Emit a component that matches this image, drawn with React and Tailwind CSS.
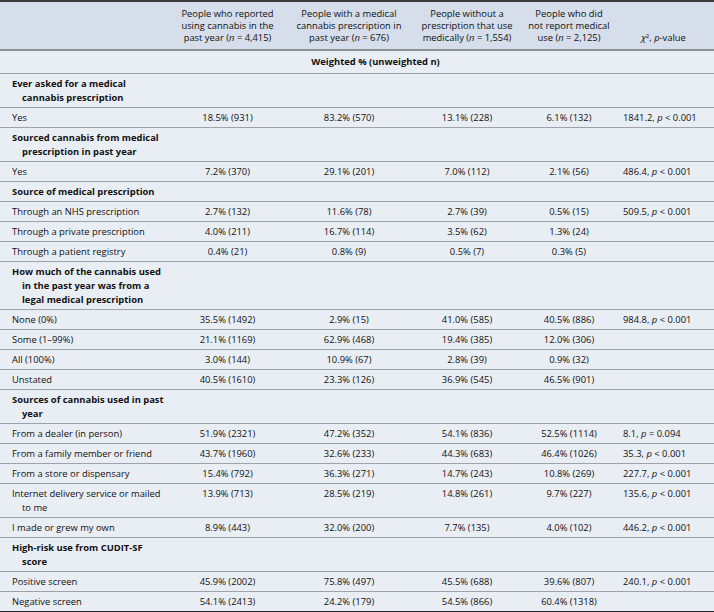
import React from "react";

const cols = [
  ["People who reported", "using cannabis in the", ["past year (", "n", " = 4,415)"]],
  ["People with a medical", "cannabis prescription in", ["past year (", "n", " = 676)"]],
  ["People without a", "prescription that use", ["medically (", "n", " = 1,554)"]],
  ["People who did", "not report medical", ["use (", "n", " = 2,125)"]],
];

const rows = [
  { section: ["Ever asked for a medical", "cannabis prescription"] },
  { label: "Yes", vals: ["18.5% (931)", "83.2% (570)", "13.1% (228)", "6.1% (132)"], stat: ["1841.2", "<", "0.001"] },
  { section: ["Sourced cannabis from medical", "prescription in past year"] },
  { label: "Yes", vals: ["7.2% (370)", "29.1% (201)", "7.0% (112)", "2.1% (56)"], stat: ["486.4", "<", "0.001"] },
  { section: ["Source of medical prescription"] },
  { label: "Through an NHS prescription", vals: ["2.7% (132)", "11.6% (78)", "2.7% (39)", "0.5% (15)"], stat: ["509.5", "<", "0.001"] },
  { label: "Through a private prescription", vals: ["4.0% (211)", "16.7% (114)", "3.5% (62)", "1.3% (24)"] },
  { label: "Through a patient registry", vals: ["0.4% (21)", "0.8% (9)", "0.5% (7)", "0.3% (5)"] },
  { section: ["How much of the cannabis used", "in the past year was from a", "legal medical prescription"] },
  { label: "None (0%)", vals: ["35.5% (1492)", "2.9% (15)", "41.0% (585)", "40.5% (886)"], stat: ["984.8", "<", "0.001"] },
  { label: "Some (1–99%)", vals: ["21.1% (1169)", "62.9% (468)", "19.4% (385)", "12.0% (306)"] },
  { label: "All (100%)", vals: ["3.0% (144)", "10.9% (67)", "2.8% (39)", "0.9% (32)"] },
  { label: "Unstated", vals: ["40.5% (1610)", "23.3% (126)", "36.9% (545)", "46.5% (901)"] },
  { section: ["Sources of cannabis used in past", "year"] },
  { label: "From a dealer (in person)", vals: ["51.9% (2321)", "47.2% (352)", "54.1% (836)", "52.5% (1114)"], stat: ["8.1", "=", "0.094"] },
  { label: "From a family member or friend", vals: ["43.7% (1960)", "32.6% (233)", "44.3% (683)", "46.4% (1026)"], stat: ["35.3", "<", "0.001"] },
  { label: "From a store or dispensary", vals: ["15.4% (792)", "36.3% (271)", "14.7% (243)", "10.8% (269)"], stat: ["227.7", "<", "0.001"] },
  { label: ["Internet delivery service or mailed", "to me"], vals: ["13.9% (713)", "28.5% (219)", "14.8% (261)", "9.7% (227)"], stat: ["135.6", "<", "0.001"] },
  { label: "I made or grew my own", vals: ["8.9% (443)", "32.0% (200)", "7.7% (135)", "4.0% (102)"], stat: ["446.2", "<", "0.001"] },
  { section: ["High-risk use from CUDIT-SF", "score"] },
  { label: "Positive screen", vals: ["45.9% (2002)", "75.8% (497)", "45.5% (688)", "39.6% (807)"], stat: ["240.1", "<", "0.001"] },
  { label: "Negative screen", vals: ["54.1% (2413)", "24.2% (179)", "54.5% (866)", "60.4% (1318)"] },
];

const Lines = ({ lines }) =>
  lines.map((l, i) => (
    <React.Fragment key={i}>
      {i > 0 && <br />}
      {l}
    </React.Fragment>
  ));

export default function App() {
  return (
    <div className="w-[714px] h-[612px] bg-[#e9eef5] text-[#111] font-['Open_Sans',sans-serif] text-[9.4px] leading-[14px]">
      <table className="w-full table-fixed border-collapse">
        <colgroup>
          <col className="w-[170px]" />
          <col className="w-[115px]" />
          <col className="w-[128px]" />
          <col className="w-[108px]" />
          <col className="w-[96px]" />
          <col />
        </colgroup>
        <thead>
          <tr className="bg-[#d5deea] border-t-2 border-t-[#3a3a3a] border-b-2 border-b-[#8d9196]">
            <th className="h-[49px]" />
            {cols.map((c, i) => (
              <th key={i} className="align-bottom text-center font-normal leading-[12px] pb-[5px] whitespace-nowrap">
                {c[0]}
                <br />
                {c[1]}
                <br />
                {c[2][0]}
                <i>{c[2][1]}</i>
                {c[2][2]}
              </th>
            ))}
            <th className="align-bottom text-center font-normal leading-[12px] pb-[5px] pr-[4px]">
              <i>χ</i>
              <sup className="text-[6px]">2</sup>, <i>p</i>-value
            </th>
          </tr>
        </thead>
        <tbody>
          <tr className="border-b border-[#9ea3a9]">
            <td className="h-[23px]" />
            <td colSpan={4} className="text-center font-bold pr-[36px]">
              Weighted % (unweighted n)
            </td>
            <td />
          </tr>
          {rows.map((r, i) => {
            const last = i === rows.length - 1;
            const border = last ? "border-b-2 border-[#2a2a2a]" : "border-b border-[#9ea3a9]";
            if (r.section) {
              return (
                <tr key={i} className={border}>
                  <td colSpan={6} className="pt-[3px] pb-[2px] pl-[22px] [text-indent:-10px] font-bold whitespace-nowrap">
                    <Lines lines={r.section} />
                  </td>
                </tr>
              );
            }
            const label = Array.isArray(r.label) ? r.label : [r.label];
            return (
              <tr key={i} className={border}>
                <td className="pt-[3px] pb-[2px] pl-[22px] [text-indent:-10px] whitespace-nowrap align-top">
                  <Lines lines={label} />
                </td>
                {r.vals.map((v, j) => (
                  <td key={j} className="pt-[3px] pb-[2px] text-center align-top whitespace-nowrap">
                    {v}
                  </td>
                ))}
                <td className="pt-[3px] pb-[2px] pl-[6px] align-top whitespace-nowrap">
                  {r.stat && (
                    <>
                      {r.stat[0]}, <i>p</i> {r.stat[1]} {r.stat[2]}
                    </>
                  )}
                </td>
              </tr>
            );
          })}
        </tbody>
      </table>
    </div>
  );
}
